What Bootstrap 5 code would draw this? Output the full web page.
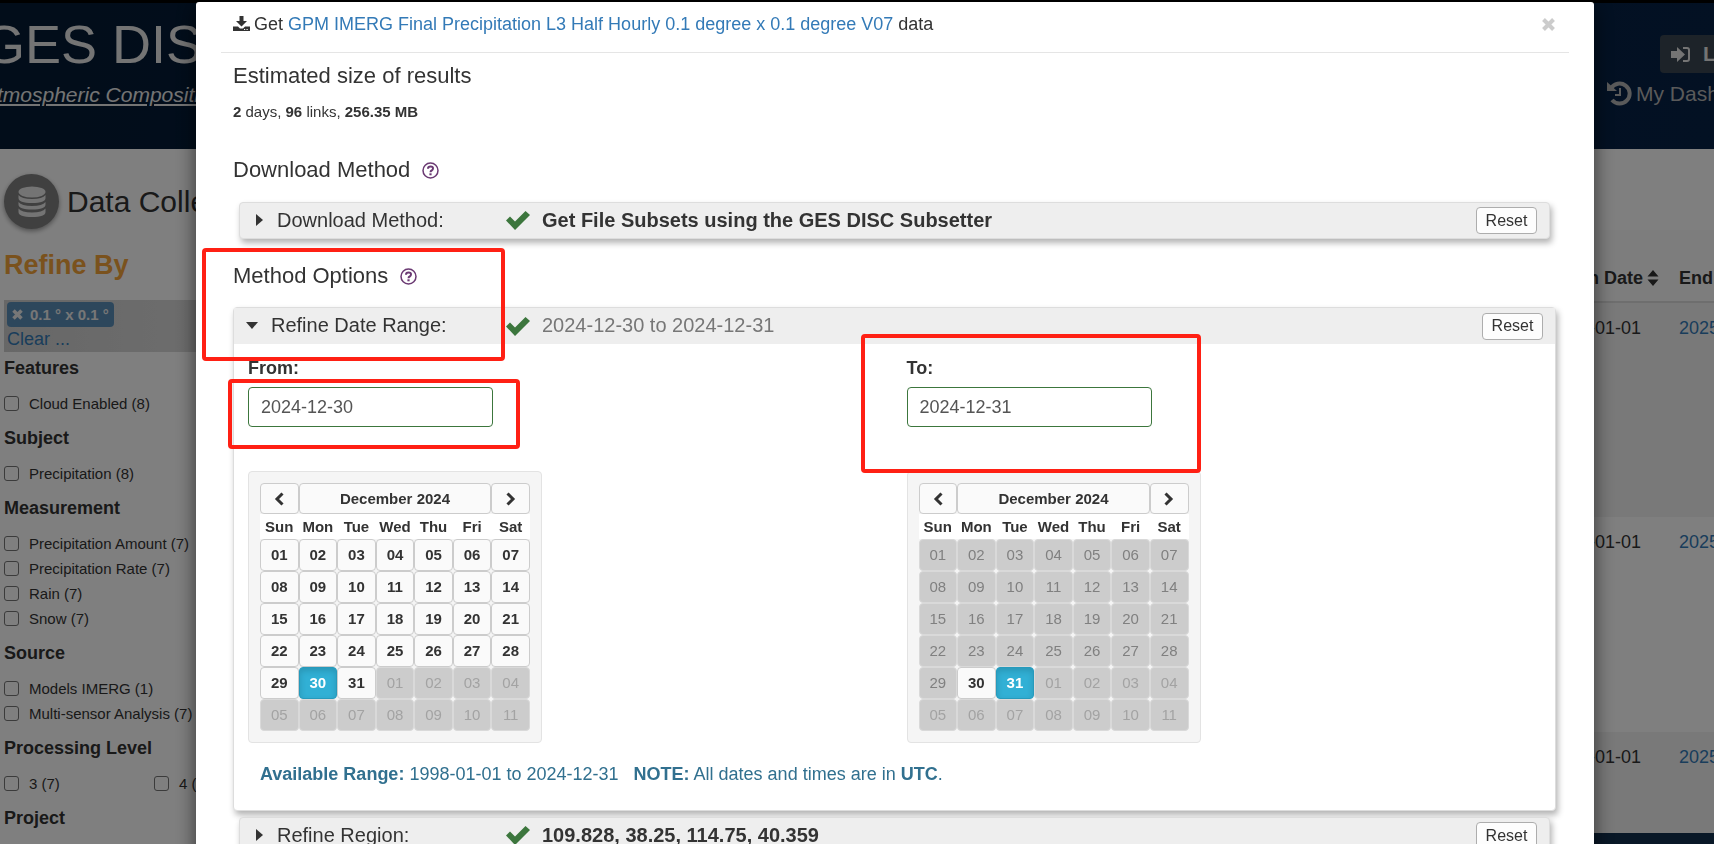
<!DOCTYPE html>
<html lang="en">
<head>
<meta charset="utf-8">
<meta name="viewport" content="width=device-width, initial-scale=1">
<title>GES DISC</title>
<link href="https://cdn.jsdelivr.net/npm/bootstrap@5.3.0/dist/css/bootstrap.min.css" rel="stylesheet">
<style>
body{font-family:"Liberation Sans",Arial,sans-serif;font-size:18px;line-height:22px;color:#333;background:#fff}
a{color:#337ab7;text-decoration:none}
svg{display:block;flex:none}
.page-shell{height:100vh;overflow:hidden;border-top:3px solid #000}
.site-header{height:146px;background:linear-gradient(100deg,#041a34,#062247);color:#e8e8e8;white-space:nowrap}
.brand-block{margin-left:-17px;padding-top:7px}
.brand-name{font-size:54px;line-height:68px}
.brand-sub{font-size:21px;line-height:24px;color:#e8e8e8;font-style:italic;text-decoration:underline;margin-top:5px}
.account-block{width:107px;padding-top:32px;font-size:21px;color:#b4b4b4}
.login-btn{margin-left:53px;height:38px;width:90px;background:#3a4652;color:#e8e8e8;font-size:21px;padding:0 11px;border:0;border-radius:4px}
.dash-link{color:#b4b4b4;margin-top:8px}
.side-col{width:308px;padding:25px 4px 0;white-space:nowrap}
.round-icon{width:55px;height:55px;border-radius:50%;background:#808080;box-shadow:0 2px 5px rgba(0,0,0,.4)}
.page-title{font-size:30px;line-height:36px;margin:0}
.refine-title{font-size:27px;line-height:32px;font-weight:700;color:#f5a43a;margin:20px 0 19px}
.active-filters{height:52px;padding:2px 3px;background:linear-gradient(90deg,#cfcfcf,#ddd 80%)}
.active-filters a{display:block;margin-top:1px}
.filter-tag{height:25px;background:#5b8fb9;color:#eee;font-size:15px;padding:0 5px;border:0;border-radius:4px;gap:7px;font-weight:700}
.facet-list{margin-top:-6px}
.facet-title{font-size:18px;line-height:45px;font-weight:700;margin:0}
.facet-item{height:25px;font-size:15px}
.facet-item input{width:15px;height:15px;margin:0;border:1px solid #767676;border-radius:3px;appearance:none;background:#fff;flex:none}
.facet-item label{margin-left:10px}
.results{width:165px;margin-top:81px;white-space:nowrap}
.results table{width:260px;table-layout:fixed;border-collapse:collapse}
.results th{height:72px;padding:37px 0 0;vertical-align:top;border-bottom:2px solid #ddd;background:#fbfbfb}
.results td{height:215px;padding:14px 0 0;vertical-align:top}
.results tbody tr:nth-child(odd){background:#f3f3f3}
.results tr.short-row td{height:101px}
.site-footer{height:40px;background:#12304e}
.backdrop-layer{opacity:.5}
.modal.sheet{overflow:hidden}
.sheet-dialog{max-width:none;margin:2px 120px 0 196px}
.sheet-content{border:0;border-radius:3px;box-shadow:0 5px 20px rgba(0,0,0,.6);color:#333}
.sheet-head{height:51px;margin:0 25px;padding:0 14px 6px 12px;border-bottom:1px solid #e5e5e5}
.close-btn{border:0;background:none;padding:0;color:#ccc}
.sheet-body{padding:10px 38px 20px 37px}
.section-title{font-size:22px;line-height:26px;font-weight:400;margin:0}
.size-line{font-size:15px;line-height:20px;margin:13px 0 35px}
.help{color:#6b3a73;border:0;background:none;padding:0}
.opt-panel{border:1px solid #ddd;border-radius:4px;background:#eee;box-shadow:2px 4px 6px rgba(0,0,0,.3);font-size:20px}
.opt-panel.closed{margin-left:6px;margin-right:6px}
.opt-panel.first{margin-top:19px}
.opt-panel.open{margin-top:18px}
.opt-panel.last{margin-top:6px}
.opt-head{height:35px;padding:0 12px}
.opt-panel.open{background:#fff}
.opt-panel.open .opt-head{background:#eee;height:36px}
.opt-toggle{width:254px;border:0;background:none;padding:0 0 2px;color:#333;text-align:left;font-size:20px}
.opt-panel.open .opt-toggle{width:260px}
.opt-value{padding:0 0 2px 12px}
.caret-box{width:25px}
.reset-btn{width:61px;height:27px;font-size:16px;line-height:20px;border:1px solid #adadad;border-radius:4px;background:#fdfdfd;color:#333;padding:0}
.date-col{padding:13px 14px 0;font-size:18px}
.date-col.to-col{padding-left:12px}
.date-col input{width:245px;height:40px;padding:0 12px;border:1px solid #3c763d;border-radius:4px;color:#555;font-size:18px;display:block;background:#fff}
.cal-well{width:294px;margin-top:44px;padding:11px;border:1px solid #e3e3e3;border-radius:4px;background:#f5f5f5}
.cal{width:270px;table-layout:fixed;border-collapse:separate;border-spacing:0;font-size:15px;line-height:18px;text-align:center}
.cal th,.cal td{padding:0}
.cal .dow th{height:25px;background:#fff}
.cal button{display:flex;align-items:center;justify-content:center;width:100%;height:32px;padding:0;border:1px solid #ccc;border-radius:4px;background:#fafafa;color:#333;font-weight:700}
.cal thead button{height:31px}
.cal button:disabled{background:#ccc;border-color:#d9d9d9;color:#808080;font-weight:400}
.cal button.other:disabled{color:#a3a3a3}
.cal button.chosen{background:#31b0d5;border-color:#269abc;color:#fff;box-shadow:inset 0 3px 6px rgba(0,0,0,.15)}
.range-note{color:#31708f;padding:20px 26px 25px;font-size:18px}
.callout{position:absolute;border:4px solid #ff2014;border-radius:4px;pointer-events:none;z-index:3}
.c-method{left:-31px;top:-15px;width:303px;height:113px}
.c-from{left:-6px;top:35px;width:292px;height:70px}
.c-to{left:-34px;top:-10px;width:340px;height:139px}
</style>
</head>
<body>
<div class="page-shell">
  <header class="site-header d-flex justify-content-between">
    <div class="brand-block">
      <div class="brand-name">GES DISC</div>
      <a class="brand-sub d-block" href="#">Atmospheric Composition</a>
    </div>
    <div class="account-block">
      <button class="login-btn d-flex align-items-center fw-bold" type="button">
        <svg class="me-2" width="20" height="17" viewBox="0 0 20 17" fill="currentColor"><path d="M0 5h6V1l8 7.500-8 7.500v-4H0z"/><path d="M12 1h4q3 0 3 3v9q0 3-3 3h-4v-2h4q1 0 1-1V4q0-1-1-1h-4z"/></svg>
        <span class="ps-1">Login</span></button>
      <a class="dash-link d-flex align-items-center gap-1" href="#">
        <svg width="25" height="25" viewBox="0 0 25 25"><path d="M4 7.500A10 10 0 1 1 5 19" fill="none" stroke="currentColor" stroke-width="4"/><path d="M0 1l10 9H0z" fill="currentColor"/><path d="M13 7v7H8" fill="none" stroke="currentColor" stroke-width="2"/></svg>
        My Dashboard</a>
    </div>
  </header>
  <div class="d-flex justify-content-between">
    <aside class="side-col">
      <div class="d-flex align-items-center gap-2">
        <span class="round-icon d-flex align-items-center justify-content-center">
          <svg width="28" height="32" viewBox="0 0 28 32" fill="#e8e8e8"><ellipse cx="14" cy="6" rx="13.500" ry="5.500"/><path d="M.5 9q3 4 13.500 4t13.500-4v3q0 5-13.500 5T.5 12zM.5 16q3 4 13.500 4t13.500-4v2.500q0 5-13.500 5t-13.500-5zM.5 22.500q3 4 13.500 4t13.500-4V26q0 5-13.500 5T.5 26z"/></svg>
        </span>
        <h1 class="page-title">Data Collections</h1>
      </div>
      <h2 class="refine-title">Refine By</h2>
      <div class="active-filters">
        <button class="filter-tag d-flex align-items-center" type="button">
          <svg width="11" height="11" viewBox="0 0 11 11"><path d="M1.500 1.500l8 8m0-8l-8 8" stroke="currentColor" stroke-width="3.500"/></svg>0.1 ° x 0.1 °</button>
        <a href="#">Clear ...</a>
      </div>
      <div class="facet-list" id="facets"></div>
    </aside>
    <section class="results">
      <table>
        <thead><tr><th><span class="d-flex align-items-center">Begin Date
          <svg class="ms-1" width="12" height="16" viewBox="0 0 12 16" fill="currentColor"><path d="M6 0l5.500 6.500H.5zM6 16l5.500-6.500H.5z"/></svg></span></th><th>End Date</th></tr></thead>
        <tbody>
          <tr><td>2000-01-01</td><td><a href="#">2025-01-31</a></td></tr>
          <tr><td>2000-01-01</td><td><a href="#">2025-01-31</a></td></tr>
          <tr class="short-row"><td>2000-01-01</td><td><a href="#">2025-01-31</a></td></tr>
        </tbody>
      </table>
      <footer class="site-footer"></footer>
    </section>
  </div>
</div>

<div class="modal-backdrop backdrop-layer"></div>
<div class="modal d-block sheet" tabindex="-1" role="dialog" aria-label="Download data">
  <div class="modal-dialog sheet-dialog">
    <div class="modal-content sheet-content">
      <div class="sheet-head d-flex align-items-center justify-content-between">
        <div class="d-flex align-items-center">
          <svg class="me-1" width="17" height="16" viewBox="0 0 17 16" fill="currentColor"><path d="M6.500 0h4v5H14L8.500 10.500 3 5h3.500z"/><path d="M0 10.500h5l2 2h3l2-2h5V15H0z"/><path d="M11 13h1.200v1H11zm2.500 0h1.200v1h-1.200z" fill="#fff"/></svg>
          <div>Get <a href="#">GPM IMERG Final Precipitation L3 Half Hourly 0.1 degree x 0.1 degree V07</a> data</div>
        </div>
        <button class="close-btn" type="button" aria-label="Close"><svg width="13" height="13" viewBox="0 0 13 13"><path d="M1.500 1.500l10 10m0-10l-10 10" stroke="currentColor" stroke-width="4"/></svg></button>
      </div>
      <div class="sheet-body">
        <h3 class="section-title">Estimated size of results</h3>
        <p class="size-line"><b>2</b> days, <b>96</b> links, <b>256.35 MB</b></p>

        <div class="d-flex align-items-center">
          <h3 class="section-title">Download Method</h3>
          <button class="help ms-2 ps-1" type="button" aria-label="Help"><svg width="17" height="17" viewBox="0 0 17 17"><circle cx="8.500" cy="8.500" r="7.500" fill="none" stroke="currentColor" stroke-width="1.500"/><path d="M6 6.800Q6 4.500 8.600 4.500T11 6.600q0 1.200-1.300 1.900-1.200.6-1.200 1.700" fill="none" stroke="currentColor" stroke-width="2"/><path d="M7.400 11.300h2.200v2H7.400z" fill="currentColor"/></svg></button>
        </div>
        <div class="opt-panel closed first">
          <div class="opt-head d-flex align-items-center">
            <button class="opt-toggle d-flex align-items-center" type="button"><span class="caret-box ps-1"><svg width="7" height="12" viewBox="0 0 7 12"><path d="M0 0l7 6-7 6z" fill="currentColor"/></svg></span>Download Method:</button>
            <svg width="24" height="19" viewBox="0 0 24 19"><path d="M0 9.500L4 5.500l5 5L19.500 0l4.500 4L9 19z" fill="#3c763d"/></svg>
            <b class="opt-value">Get File Subsets using the GES DISC Subsetter</b>
            <button class="reset-btn ms-auto" type="button">Reset</button>
          </div>
        </div>

        <div class="position-relative d-flex align-items-center mt-4">
          <h3 class="section-title">Method Options</h3>
          <button class="help ms-2 ps-1" type="button" aria-label="Help"><svg width="17" height="17" viewBox="0 0 17 17"><circle cx="8.500" cy="8.500" r="7.500" fill="none" stroke="currentColor" stroke-width="1.500"/><path d="M6 6.800Q6 4.500 8.600 4.500T11 6.600q0 1.200-1.300 1.900-1.200.6-1.200 1.700" fill="none" stroke="currentColor" stroke-width="2"/><path d="M7.400 11.300h2.200v2H7.400z" fill="currentColor"/></svg></button>
          <span class="callout c-method"></span>
        </div>
        <div class="opt-panel open">
          <div class="opt-head d-flex align-items-center">
            <button class="opt-toggle d-flex align-items-center" type="button"><span class="caret-box"><svg width="12" height="7" viewBox="0 0 12 7"><path d="M0 0h12L6 7z" fill="currentColor"/></svg></span>Refine Date Range:</button>
            <svg width="24" height="19" viewBox="0 0 24 19"><path d="M0 9.500L4 5.500l5 5L19.500 0l4.500 4L9 19z" fill="#3c763d"/></svg>
            <span class="opt-value" style="color:#777">2024-12-30 to 2024-12-31</span>
            <button class="reset-btn ms-auto" type="button">Reset</button>
          </div>
          <div class="row g-0">
            <div class="col-6 date-col position-relative">
              <label class="fw-bold d-block mb-2" for="from-date">From:</label>
              <input id="from-date" type="text" value="2024-12-30">
              <span class="callout c-from"></span>
              <div class="cal-well"><table class="cal" data-first="1" data-chosen="30"></table></div>
            </div>
            <div class="col-6 date-col to-col position-relative">
              <label class="fw-bold d-block mb-2" for="to-date">To:</label>
              <input id="to-date" type="text" value="2024-12-31">
              <span class="callout c-to"></span>
              <div class="cal-well"><table class="cal" data-first="30" data-chosen="31"></table></div>
            </div>
          </div>
          <div class="range-note"><b>Available Range:</b> 1998-01-01 to 2024-12-31 &nbsp; <b>NOTE:</b> All dates and times are in <b>UTC</b>.</div>
        </div>

        <div class="opt-panel closed last">
          <div class="opt-head d-flex align-items-center">
            <button class="opt-toggle d-flex align-items-center" type="button"><span class="caret-box ps-1"><svg width="7" height="12" viewBox="0 0 7 12"><path d="M0 0l7 6-7 6z" fill="currentColor"/></svg></span>Refine Region:</button>
            <svg width="24" height="19" viewBox="0 0 24 19"><path d="M0 9.500L4 5.500l5 5L19.500 0l4.500 4L9 19z" fill="#3c763d"/></svg>
            <b class="opt-value">109.828, 38.25, 114.75, 40.359</b>
            <button class="reset-btn ms-auto" type="button">Reset</button>
          </div>
        </div>
      </div>
    </div>
  </div>
</div>
<script>
// Month grids: December 2024 starts on a Sunday, so day 1 is the first cell.
document.querySelectorAll('.cal').forEach(function (t) {
  var first = +t.dataset.first, chosen = +t.dataset.chosen;
  var arrow = function (d) { return '<svg width="10" height="14" viewBox="0 0 10 14"><path d="' + d + '" fill="none" stroke="currentColor" stroke-width="3"/></svg>'; };
  var h = '<thead><tr><th><button type="button" aria-label="Previous month">' + arrow('M8.500 1.500L3 7l5.500 5.500') + '</button></th>' +
    '<th colspan="5"><button type="button">December 2024</button></th>' +
    '<th><button type="button" aria-label="Next month">' + arrow('M1.500 1.500L7 7l-5.500 5.500') + '</button></th></tr><tr class="dow">';
  ['Sun', 'Mon', 'Tue', 'Wed', 'Thu', 'Fri', 'Sat'].forEach(function (d) { h += '<th>' + d + '</th>'; });
  h += '</tr></thead><tbody>';
  for (var i = 1; i <= 42; i++) {
    var other = i > 31, n = other ? i - 31 : i;
    if (i % 7 === 1) h += '<tr>';
    h += '<td><button type="button" class="' + (other ? 'other' : i === chosen ? 'chosen' : '') + '"' +
      (other || i < first ? ' disabled' : '') + '>' + String(n).padStart(2, '0') + '</button></td>';
    if (i % 7 === 0) h += '</tr>';
  }
  t.innerHTML = h + '</tbody>';
});
// Sidebar facets
var id = 0;
document.getElementById('facets').innerHTML = [
  ['Features', ['Cloud Enabled (8)']],
  ['Subject', ['Precipitation (8)']],
  ['Measurement', ['Precipitation Amount (7)', 'Precipitation Rate (7)', 'Rain (7)', 'Snow (7)']],
  ['Source', ['Models IMERG (1)', 'Multi-sensor Analysis (7)']],
  ['Processing Level', [['3 (7)', '4 (1)']]],
  ['Project', []]
].map(function (g) {
  return '<h3 class="facet-title">' + g[0] + '</h3>' + g[1].map(function (r) {
    return '<div class="row g-0">' + [].concat(r).map(function (x) {
      id++;
      return '<div class="facet-item d-flex align-items-center ' + (Array.isArray(r) ? 'col-6' : 'col-12') + '"><input type="checkbox" id="f' + id + '"><label for="f' + id + '">' + x + '</label></div>';
    }).join('') + '</div>';
  }).join('');
}).join('');
</script>
<script src="https://cdn.jsdelivr.net/npm/bootstrap@5.3.0/dist/js/bootstrap.bundle.min.js"></script>
</body>
</html>
